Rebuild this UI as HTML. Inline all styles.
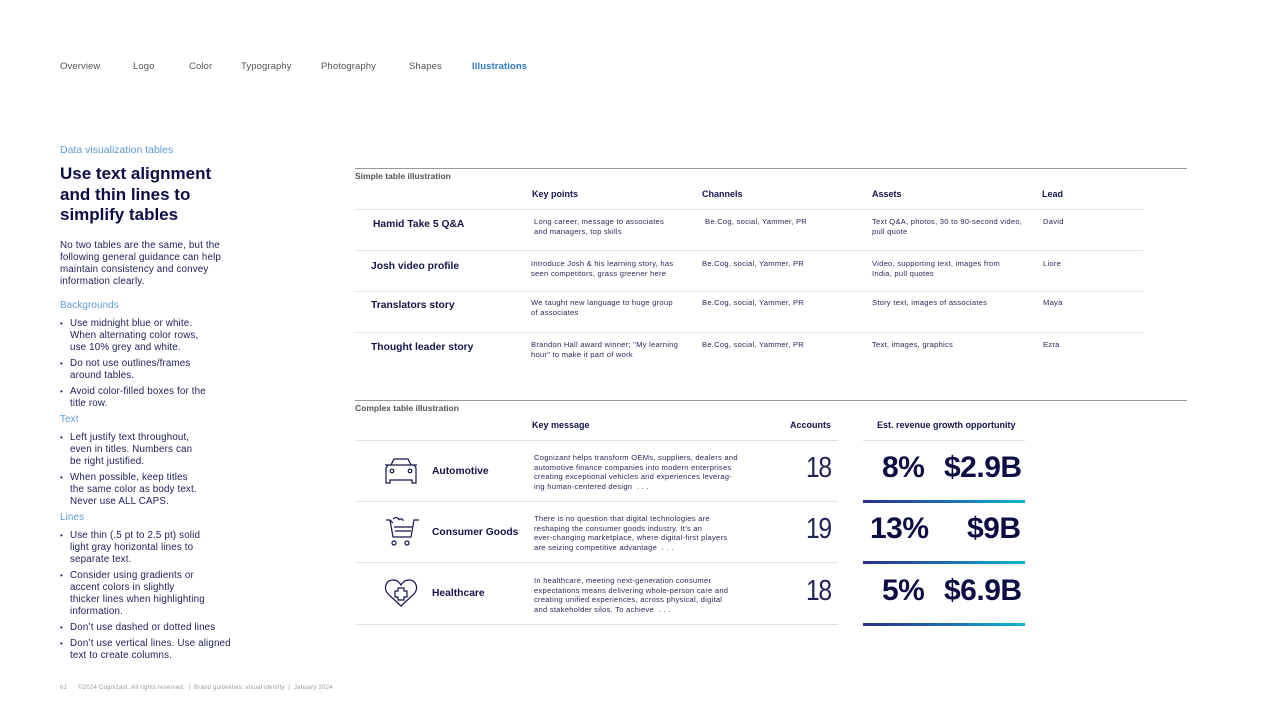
<!DOCTYPE html>
<html><head><meta charset="utf-8">
<style>
*{margin:0;padding:0;box-sizing:border-box}
body{width:1280px;height:720px;background:#fff;position:relative;overflow:hidden;font-family:"Liberation Sans",sans-serif;color:#14144a}
.a{position:absolute;white-space:nowrap}
.nav{top:61px;font-size:9.5px;color:#555;letter-spacing:0.1px}
.s{font-size:7.6px;line-height:9.5px;color:#2a2a5a;letter-spacing:0.25px}
.h{font-size:9px;font-weight:bold;color:#14144a}
.r{font-size:10.3px;font-weight:bold}
.ln{position:absolute;height:1px;background:#e2e2e2}
.side{font-size:9.8px;line-height:12px;color:#1e1e55;letter-spacing:0.15px}
.sub{font-size:9.8px;color:#5b9bd5}
ul{list-style:none}
li{position:relative;padding-left:10px;margin-bottom:4px}
li:before{content:"•";position:absolute;left:0;font-size:8px}
.num{font-size:29px;color:#22225a;font-weight:normal;letter-spacing:-1.5px;transform:scaleX(0.85);transform-origin:left}
.big{font-size:30px;font-weight:bold;color:#0d0d45;letter-spacing:-0.5px}
.g{position:absolute;left:863px;width:162px;height:3px;background:linear-gradient(90deg,#2b2f85,#1e6fb3 55%,#11b8c8)}
</style></head><body>
<div class="a nav" style="left:60px">Overview</div>
<div class="a nav" style="left:133px">Logo</div>
<div class="a nav" style="left:189px">Color</div>
<div class="a nav" style="left:241px">Typography</div>
<div class="a nav" style="left:321px">Photography</div>
<div class="a nav" style="left:409px">Shapes</div>
<div class="a nav" style="left:472px;color:#2f78c4;font-weight:bold">Illustrations</div>

<div class="a sub" style="left:60px;top:144px;font-size:10.5px">Data visualization tables</div>
<div class="a" style="left:60px;top:164px;font-size:17px;line-height:20.5px;font-weight:bold;color:#0d0d45">Use text alignment<br>and thin lines to<br>simplify tables</div>
<div class="a side" style="left:60px;top:240px">No two tables are the same, but the<br>following general guidance can help<br>maintain consistency and convey<br>information clearly.</div>
<div class="a side" style="left:60px;top:300px;width:190px;white-space:normal">
<div class="sub" style="margin-bottom:6px">Backgrounds</div>
<ul><li>Use midnight blue or white.<br>When alternating color rows,<br>use 10% grey and white.</li>
<li>Do not use outlines/frames<br>around tables.</li>
<li>Avoid color-filled boxes for the<br>title row.</li></ul>
<div class="sub" style="margin:0 0 6px">Text</div>
<ul><li>Left justify text throughout,<br>even in titles. Numbers can<br>be right justified.</li>
<li>When possible, keep titles<br>the same color as body text.<br>Never use ALL CAPS.</li></ul>
<div class="sub" style="margin:0 0 6px">Lines</div>
<ul><li>Use thin (.5 pt to 2.5 pt) solid<br>light gray horizontal lines to<br>separate text.</li>
<li>Consider using gradients or<br>accent colors in slightly<br>thicker lines when highlighting<br>information.</li>
<li>Don’t use dashed or dotted lines</li>
<li>Don’t use vertical lines. Use aligned<br>text to create columns.</li></ul>
</div>
<div class="a" style="left:60px;top:685px;font-size:6px;color:#999;letter-spacing:0.2px">61 &nbsp;&nbsp;&nbsp;&nbsp;&nbsp;©2024 Cognizant. All rights reserved. &nbsp;| &nbsp;Brand guidelines: visual identity &nbsp;| &nbsp;January 2024</div>

<!-- simple table -->
<div class="ln" style="left:355px;top:168px;width:832px;background:#999"></div>
<div class="a" style="left:355px;top:171px;font-size:8.5px;color:#555;font-weight:bold">Simple table illustration</div>
<div class="a h" style="left:532px;top:189px">Key points</div>
<div class="a h" style="left:702px;top:189px">Channels</div>
<div class="a h" style="left:872px;top:189px">Assets</div>
<div class="a h" style="left:1042px;top:189px">Lead</div>
<div class="ln" style="left:355px;top:209px;width:788px"></div>
<div class="ln" style="left:355px;top:250px;width:788px"></div>
<div class="ln" style="left:355px;top:291px;width:788px"></div>
<div class="ln" style="left:355px;top:332px;width:788px"></div>

<div class="a r" style="left:373px;top:219px">Hamid Take 5 Q&amp;A</div>
<div class="a s" style="left:534px;top:217px">Long career, message to associates<br>and managers, top skills</div>
<div class="a s" style="left:705px;top:217px">Be.Cog, social, Yammer, PR</div>
<div class="a s" style="left:872px;top:217px">Text Q&amp;A, photos, 30 to 90-second video,<br>pull quote</div>
<div class="a s" style="left:1043px;top:217px">David</div>

<div class="a r" style="left:371px;top:261px">Josh video profile</div>
<div class="a s" style="left:531px;top:259px">Introduce Josh &amp; his learning story, has<br>seen competitors, grass greener here</div>
<div class="a s" style="left:702px;top:259px">Be.Cog, social, Yammer, PR</div>
<div class="a s" style="left:872px;top:259px">Video, supporting text, images from<br>India, pull quotes</div>
<div class="a s" style="left:1043px;top:259px">Liore</div>

<div class="a r" style="left:371px;top:300px">Translators story</div>
<div class="a s" style="left:531px;top:298px">We taught new language to huge group<br>of associates</div>
<div class="a s" style="left:702px;top:298px">Be.Cog, social, Yammer, PR</div>
<div class="a s" style="left:872px;top:298px">Story text, images of associates</div>
<div class="a s" style="left:1043px;top:298px">Maya</div>

<div class="a r" style="left:371px;top:342px">Thought leader story</div>
<div class="a s" style="left:531px;top:340px">Brandon Hall award winner; "My learning<br>hour" to make it part of work</div>
<div class="a s" style="left:702px;top:340px">Be.Cog, social, Yammer, PR</div>
<div class="a s" style="left:872px;top:340px">Text, images, graphics</div>
<div class="a s" style="left:1043px;top:340px">Ezra</div>

<!-- complex table -->
<div class="ln" style="left:355px;top:400px;width:832px;background:#999"></div>
<div class="a" style="left:355px;top:403px;font-size:8.5px;color:#555;font-weight:bold">Complex table illustration</div>
<div class="a h" style="left:532px;top:420px">Key message</div>
<div class="a h" style="left:790px;top:420px">Accounts</div>
<div class="a h" style="left:877px;top:420px">Est. revenue growth opportunity</div>
<div class="ln" style="left:355px;top:440px;width:483px"></div>
<div class="ln" style="left:355px;top:501px;width:483px"></div>
<div class="ln" style="left:355px;top:562px;width:483px"></div>
<div class="ln" style="left:355px;top:624px;width:483px"></div>
<div class="ln" style="left:863px;top:440px;width:162px"></div>
<div class="g" style="top:500px"></div>
<div class="g" style="top:561px"></div>
<div class="g" style="top:623px"></div>

<svg class="a" style="left:384px;top:457px" width="34" height="28" viewBox="0 0 34 28" fill="none" stroke="#14144a" stroke-width="1.2"><path d="M7 8 L10 2 H24 L27 8"/><path d="M4 8 H30 L32 11 V26 H28 V23 H6 V26 H2 V11 Z"/><path d="M1 8 H4 M30 8 H33"/><circle cx="8" cy="14" r="1.8"/><circle cx="26" cy="14" r="1.8"/></svg>
<div class="a r" style="left:432px;top:466px">Automotive</div>
<div class="a s" style="left:534px;top:453px">Cognizant helps transform OEMs, suppliers, dealers and<br>automotive finance companies into modern enterprises<br>creating exceptional vehicles and experiences leverag-<br>ing human-centered design &nbsp;. . .</div>
<div class="a num" style="left:806px;top:452px">18</div>
<div class="a big" style="left:882px;top:451px">8%</div>
<div class="a big" style="left:944px;top:451px">$2.9B</div>

<svg class="a" style="left:385px;top:517px" width="34" height="30" viewBox="0 0 34 30" fill="none" stroke="#14144a" stroke-width="1.2"><path d="M1 3 H5 L8 20 H26 L29 3 H34"/><path d="M9 10 H27 M10 14 H26"/><path d="M5 3 L8 6 M8 2 C10 0 13 0 14 3 M14 3 C16 1 18 2 18 4"/><circle cx="9" cy="26" r="2"/><circle cx="22" cy="26" r="2"/></svg>
<div class="a r" style="left:432px;top:527px">Consumer Goods</div>
<div class="a s" style="left:534px;top:514px">There is no question that digital technologies are<br>reshaping the consumer goods industry. It’s an<br>ever-changing marketplace, where digital-first players<br>are seizing competitive advantage &nbsp;. . .</div>
<div class="a num" style="left:806px;top:513px">19</div>
<div class="a big" style="left:870px;top:512px">13%</div>
<div class="a big" style="left:967px;top:512px">$9B</div>

<svg class="a" style="left:384px;top:578px" width="34" height="30" viewBox="0 0 34 30" fill="none" stroke="#14144a" stroke-width="1.2"><path d="M17 28 L4 16 C-1 10 2 2 9 2 C13 2 15 4 17 7 C19 4 21 2 25 2 C32 2 35 10 30 16 Z"/><path d="M14 10 H20 V13 H23 V19 H20 V22 H14 V19 H11 V13 H14 Z"/></svg>
<div class="a r" style="left:432px;top:588px">Healthcare</div>
<div class="a s" style="left:534px;top:576px">In healthcare, meeting next-generation consumer<br>expectations means delivering whole-person care and<br>creating unified experiences, across physical, digital<br>and stakeholder silos. To achieve &nbsp;. . .</div>
<div class="a num" style="left:806px;top:575px">18</div>
<div class="a big" style="left:882px;top:574px">5%</div>
<div class="a big" style="left:944px;top:574px">$6.9B</div>
</body></html>
